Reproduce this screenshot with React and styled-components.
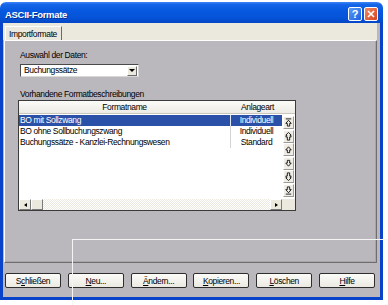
import React from "react";
import styled, { createGlobalStyle } from "styled-components";

const GlobalStyle = createGlobalStyle`
  html, body {
    margin: 0;
    padding: 0;
    background: #fff;
  }
  body {
    font-family: "Liberation Sans", Arial, sans-serif;
    font-size: 8.5px;
    letter-spacing: -0.38px;
    color: #000;
  }
  * {
    box-sizing: border-box;
  }
`;

const Page = styled.div`
  position: relative;
  width: 388px;
  height: 305px;
  overflow: hidden;
  padding-top: 2px;
`;

const Window = styled.div`
  width: 383px;
  display: flex;
  flex-direction: column;
`;

const TitleBar = styled.div`
  height: 21px;
  display: flex;
  align-items: center;
  padding: 3px 5px 0 5px;
  border-radius: 6px 6px 0 0;
  background: linear-gradient(
    to bottom,
    #3f86f6 0%,
    #1565e8 12%,
    #0759df 40%,
    #0553d8 75%,
    #0447c6 100%
  );
`;

const Title = styled.span`
  color: #fff;
  font-weight: bold;
  font-size: 9.5px;
  letter-spacing: -0.3px;
  text-shadow: 1px 1px 0 #0a2f8f;
`;

const CaptionButtons = styled.div`
  margin-left: auto;
  display: flex;
  gap: 2px;
`;

const CaptionButton = styled.div`
  width: 14px;
  height: 14px;
  border: 1px solid #fff;
  border-radius: 2px;
  display: flex;
  align-items: center;
  justify-content: center;
  color: #fff;
  font-weight: bold;
  font-size: 11px;
  background: ${({ close }) =>
    close
      ? "linear-gradient(to bottom right, #f08a63, #d6431b)"
      : "linear-gradient(to bottom right, #5c9bf8, #1d5fe0)"};
`;

const Frame = styled.div`
  border: 3px solid #0843c9;
  border-top: none;
`;

const Body = styled.div`
  height: 274px;
  background: #bbb8bd;
  display: flex;
  flex-direction: column;
  padding: 0 3px 0 1px;
`;

const TabStrip = styled.div`
  height: 17px;
  background: #ebe8dd;
  display: flex;
  align-items: flex-end;
  padding-left: 2px;
  margin-left: -1px;
`;

const Tab = styled.div`
  width: 57px;
  height: 14px;
  border-top: 1px solid #fff;
  border-left: 1px solid #fff;
  border-right: 1px solid #6a6a6a;
  background: #ebe8dd;
  padding: 2px 0 0 3px;
  line-height: 10px;
`;

const Panel = styled.div`
  height: 223px;
  border-top: 1px solid #fff;
  border-left: 1px solid #fff;
  border-right: 1px solid #6e6e6e;
  border-bottom: 1px solid #6e6e6e;
  box-shadow: inset -1px -1px 0 #a9a6ab;
  padding: 9px 0 0 13px;
  display: flex;
  flex-direction: column;
  align-items: flex-start;
`;

const Label = styled.div`
  height: 10px;
  line-height: 10px;
  margin-left: 2px;
  margin-top: ${({ gap }) => gap || 0}px;
`;

const Combo = styled.div`
  width: 119px;
  height: 13px;
  margin: 4px 0 0 2px;
  background: #fff;
  border: 1px solid #4a4a4a;
  border-right-color: #d8d8d8;
  border-bottom-color: #d8d8d8;
  display: flex;
  align-items: center;
  padding: 0 1px 0 3px;
`;

const ComboText = styled.span`
  flex: 1;
  line-height: 11px;
`;

const ComboButton = styled.div`
  width: 10px;
  height: 10px;
  background: #ebe8dd;
  border: 1px solid #fff;
  border-right-color: #6a6a6a;
  border-bottom-color: #6a6a6a;
  display: flex;
  align-items: center;
  justify-content: center;
`;

const Triangle = styled.span`
  width: 0;
  height: 0;
  border-style: solid;
  ${({ dir }) =>
    dir === "down"
      ? "border-width: 3px 3px 0 3px; border-color: #000 transparent transparent transparent;"
      : dir === "left"
      ? "border-width: 2.5px 3px 2.5px 0; border-color: transparent #000 transparent transparent;"
      : "border-width: 2.5px 0 2.5px 3px; border-color: transparent transparent transparent #000;"}
`;

const ListBox = styled.div`
  width: 278px;
  height: 111px;
  margin-top: 1px;
  border: 1px solid #3b3b3b;
  background: #fff;
  display: flex;
  flex-direction: column;
`;

const Header = styled.div`
  height: 13px;
  display: grid;
  grid-template-columns: 211px 52px 13px;
  background: linear-gradient(to bottom, #fbfbf9, #ecebe4);
  border-bottom: 1px solid #c9c7bd;
  line-height: 12px;
`;

const HeaderCell = styled.div`
  text-align: ${({ align }) => align || "center"};
  padding-right: ${({ pr }) => pr || 0}px;
  white-space: nowrap;
`;

const ListBody = styled.div`
  height: 85px;
  display: flex;
`;

const Rows = styled.div`
  width: 263px;
  padding-top: 1px;
`;

const Row = styled.div`
  height: 11px;
  display: grid;
  grid-template-columns: 211px 52px;
  line-height: 11px;
  background: ${({ selected }) => (selected ? "#2b50a8" : "transparent")};
  color: ${({ selected }) => (selected ? "#fff" : "#000")};
`;

const NameCell = styled.div`
  padding-left: 1px;
  white-space: nowrap;
`;

const KindCell = styled.div`
  text-align: center;
  white-space: nowrap;
  border-left: 1px solid ${({ selected }) => (selected ? "#dfe6f5" : "#d4d4d4")};
`;

const SideColumn = styled.div`
  width: 13px;
  display: flex;
  flex-direction: column;
  gap: 0.6px;
  padding: 2px 0 0 1px;
`;

const SideButton = styled.div`
  width: 11px;
  height: 13px;
  background: #efede5;
  border: 1px solid #fff;
  border-right-color: #9c9a94;
  border-bottom-color: #9c9a94;
  display: flex;
  align-items: center;
  justify-content: center;
`;

const ScrollBar = styled.div`
  height: 11px;
  display: flex;
`;

const ScrollPart = styled.div`
  width: ${({ w }) => w || 12}px;
  background: #ebe8dd;
  border: 1px solid #fff;
  border-right-color: #7a7a7a;
  border-bottom-color: #7a7a7a;
  display: flex;
  align-items: center;
  justify-content: center;
`;

const Track = styled.div`
  flex: 1;
  background-image: repeating-conic-gradient(#ebe9e0 0 25%, #fff 0 50%);
  background-size: 2px 2px;
`;

const Corner = styled.div`
  width: 13px;
  background: #ebe8dd;
`;

const ButtonRow = styled.div`
  display: flex;
  gap: 6.8px;
  padding: 10px 0 0 1px;
`;

const Button = styled.div`
  width: 56px;
  height: 15px;
  border: 1px solid #2e2e2e;
  border-radius: 2px;
  background: linear-gradient(to bottom, #fbfbf8, #ebe9e1);
  text-align: center;
  line-height: 14px;
`;

const Key = styled.span`
  text-decoration: underline;
`;

const Callout = styled.div`
  position: absolute;
  left: 72px;
  top: 239px;
  right: 0;
  bottom: 0;
  border-top: 1px solid #f4f4f4;
  border-left: 1px solid #f4f4f4;
  pointer-events: none;
`;

const arrowShapes = {
  top: (
    <>
      <line x1="1" y1="1" x2="8" y2="1" />
      <polygon points="4.5,2.5 8,6 6,6 6,9 3,9 3,6 1,6" />
    </>
  ),
  upTwo: (
    <polygon points="4.5,0.5 8,3.5 6.5,3.5 8,5.5 6,5.5 6,9 3,9 3,5.5 1,5.5 2.5,3.5 1,3.5" />
  ),
  up: <polygon points="4.5,2 8,5.5 6,5.5 6,8.5 3,8.5 3,5.5 1,5.5" />,
  down: <polygon points="4.5,8 8,4.5 6,4.5 6,1.5 3,1.5 3,4.5 1,4.5" />,
  downTwo: (
    <polygon points="4.5,9.5 8,6.5 6.5,6.5 8,4.5 6,4.5 6,1 3,1 3,4.5 1,4.5 2.5,6.5 1,6.5" />
  ),
  bottom: (
    <>
      <line x1="1" y1="9" x2="8" y2="9" />
      <polygon points="4.5,7.5 8,4 6,4 6,1 3,1 3,4 1,4" />
    </>
  ),
};

function MoveIcon({ kind }) {
  return (
    <svg
      width="7"
      height="9"
      viewBox="0 0 9 10"
      preserveAspectRatio="none"
      fill="none"
      stroke="#000"
      strokeWidth="1"
    >
      {arrowShapes[kind]}
    </svg>
  );
}

const formats = [
  { name: "BO mit Sollzwang", kind: "Individuell", selected: true },
  { name: "BO ohne Sollbuchungszwang", kind: "Individuell" },
  { name: "Buchungssätze - Kanzlei-Rechnungswesen", kind: "Standard" },
];

const moves = ["top", "upTwo", "up", "down", "downTwo", "bottom"];

export default function App() {
  return (
    <Page>
      <GlobalStyle />
      <Window>
        <TitleBar>
          <Title>ASCII-Formate</Title>
          <CaptionButtons>
            <CaptionButton>?</CaptionButton>
            <CaptionButton close>
              <svg width="8" height="8" viewBox="0 0 8 8" stroke="#fff" strokeWidth="1.6">
                <line x1="1" y1="1" x2="7" y2="7" />
                <line x1="7" y1="1" x2="1" y2="7" />
              </svg>
            </CaptionButton>
          </CaptionButtons>
        </TitleBar>
        <Frame>
          <Body>
            <TabStrip>
              <Tab>Importformate</Tab>
            </TabStrip>
            <Panel>
              <Label>Auswahl der Daten:</Label>
              <Combo>
                <ComboText>Buchungssätze</ComboText>
                <ComboButton>
                  <Triangle dir="down" />
                </ComboButton>
              </Combo>
              <Label gap={12}>Vorhandene Formatbeschreibungen</Label>
              <ListBox>
                <Header>
                  <HeaderCell>Formatname</HeaderCell>
                  <HeaderCell align="right" pr={8}>Anlageart</HeaderCell>
                  <HeaderCell />
                </Header>
                <ListBody>
                  <Rows>
                    {formats.map((f) => (
                      <Row key={f.name} selected={f.selected}>
                        <NameCell>{f.name}</NameCell>
                        <KindCell selected={f.selected}>{f.kind}</KindCell>
                      </Row>
                    ))}
                  </Rows>
                  <SideColumn>
                    {moves.map((m) => (
                      <SideButton key={m}>
                        <MoveIcon kind={m} />
                      </SideButton>
                    ))}
                  </SideColumn>
                </ListBody>
                <ScrollBar>
                  <ScrollPart>
                    <Triangle dir="left" />
                  </ScrollPart>
                  <ScrollPart />
                  <Track />
                  <ScrollPart>
                    <Triangle dir="right" />
                  </ScrollPart>
                  <Corner />
                </ScrollBar>
              </ListBox>
            </Panel>
            <ButtonRow>
              <Button>S<Key>c</Key>hließen</Button>
              <Button><Key>N</Key>eu...</Button>
              <Button><Key>Ä</Key>ndern...</Button>
              <Button><Key>K</Key>opieren...</Button>
              <Button><Key>L</Key>öschen</Button>
              <Button><Key>H</Key>ilfe</Button>
            </ButtonRow>
          </Body>
        </Frame>
      </Window>
      <Callout />
    </Page>
  );
}
